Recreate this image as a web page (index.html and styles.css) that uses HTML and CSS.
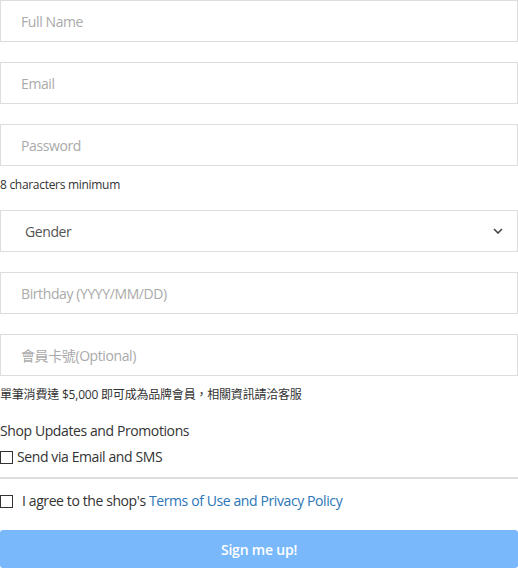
FILE: index.html
```html
<!DOCTYPE html>
<html lang="zh-Hant">
<head>
<meta charset="utf-8">
<title>Sign up</title>
<link rel="stylesheet" href="styles.css">
</head>
<body>
<form class="signup">
  <div class="field"><input class="input" type="text" placeholder="Full Name"></div>
  <div class="field"><input class="input" type="email" placeholder="Email"></div>
  <div class="field">
    <input class="input" type="password" placeholder="Password">
    <p class="hint">8 characters minimum</p>
  </div>
  <div class="field select-wrap">
    <select class="input select">
      <option>Gender</option>
    </select>
    <svg class="chevron" width="10" height="6" viewBox="0 0 10 6"><path d="M1 1l4 4 4-4" fill="none" stroke="#444" stroke-width="1.6"/></svg>
  </div>
  <div class="field"><input class="input" type="text" placeholder="Birthday (YYYY/MM/DD)"></div>
  <div class="field">
    <input class="input" type="text" placeholder="會員卡號(Optional)">
    <p class="hint cjk">單筆消費達 $5,000 即可成為品牌會員，相關資訊請洽客服</p>
  </div>
  <div class="updates">
    <p class="updates-title">Shop Updates and Promotions</p>
    <label class="check"><input type="checkbox" class="box"><span>Send via Email and SMS</span></label>
  </div>
  <label class="agree"><input type="checkbox" class="box"><span>I agree to the shop's <a href="#" class="link">Terms of Use and Privacy Policy</a></span></label>
  <button type="button" class="submit">Sign me up!</button>
</form>
</body>
</html>
```
FILE: styles.css
```css
* { box-sizing: border-box; }
html, body { margin: 0; padding: 0; background: #fff; }
body {
  font-family: "Open Sans", "Noto Sans CJK TC", sans-serif;
  color: #333;
  width: 518px;
  letter-spacing: -0.4px;
}
.signup { display: flex; flex-direction: column; }
.field { margin-bottom: 20px; position: relative; }
.input {
  display: block;
  width: 100%;
  height: 42px;
  border: 1px solid #ddd;
  border-radius: 0;
  padding: 0 20px;
  font-family: "Open Sans", "Noto Sans CJK TC", sans-serif;
  font-size: 14px;
  letter-spacing: -0.4px;
  color: #555;
  background: #fff;
  outline: none;
}
.input::placeholder { color: #aaa; }
.select {
  appearance: none;
  -webkit-appearance: none;
  padding-left: 24px;
  color: #555;
}
.chevron { position: absolute; right: 15px; top: 18px; }
.hint {
  margin: 10px 0 -3px;
  font-size: 12px;
  line-height: 17px;
  letter-spacing: -0.3px;
  color: #333;
}
.hint.cjk { margin-bottom: -3px; letter-spacing: -0.2px; }
.updates-title { margin: 0; font-size: 14px; line-height: 22px; color: #333; }
.check, .agree {
  display: flex;
  align-items: center;
  font-size: 14px;
  line-height: 20px;
  color: #333;
}
.check { margin-top: 5px; padding-bottom: 10px; border-bottom: 2px solid #ddd; }
.box {
  appearance: none;
  -webkit-appearance: none;
  width: 13px;
  height: 13px;
  margin: 0 4px 0 0;
  border: 1px solid #333;
  border-radius: 0;
  background: #fff;
  flex: none;
}
.agree { margin-top: 12px; }
.agree .box { margin-right: 9px; }
.link { color: #2a76b8; text-decoration: none; }
.submit {
  margin-top: 19px;
  height: 38px;
  width: 100%;
  border: none;
  border-radius: 3px;
  background: #79b8fa;
  color: #fff;
  font-family: "Open Sans", sans-serif;
  font-size: 14px;
  font-weight: 600;
  letter-spacing: -0.2px;
}
```
